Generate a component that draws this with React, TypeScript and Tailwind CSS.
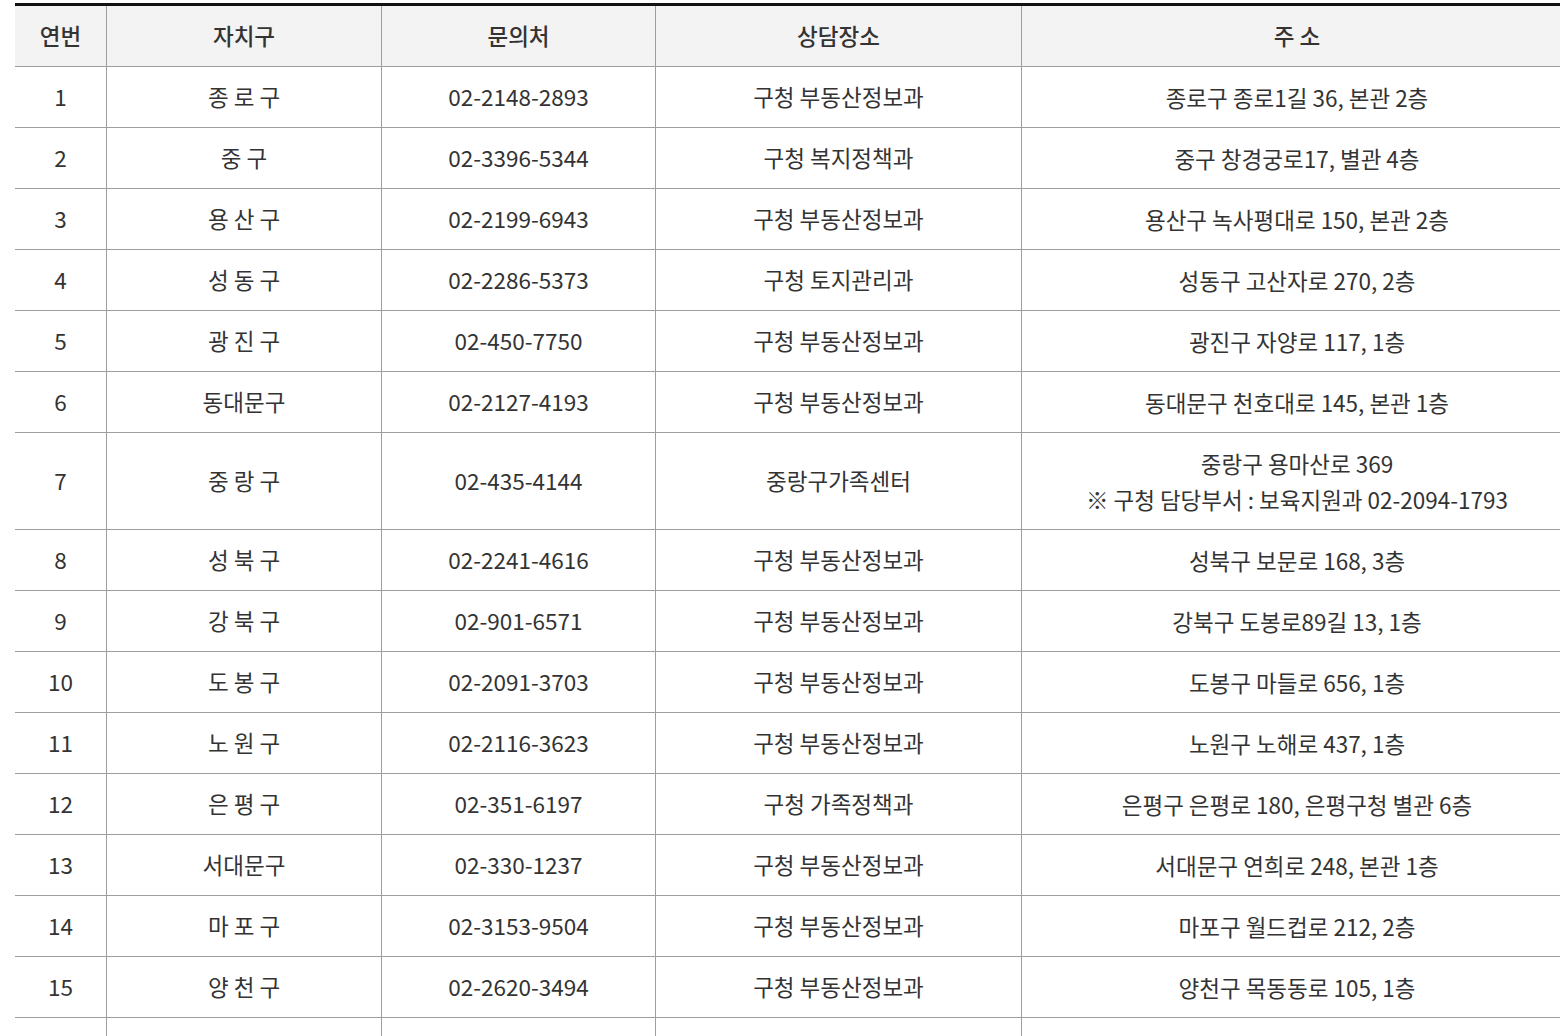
const rows = [
  { no: "1", gu: "종 로 구", tel: "02-2148-2893", place: "구청 부동산정보과", addr: ["종로구 종로1길 36, 본관 2층"] },
  { no: "2", gu: "중 구", tel: "02-3396-5344", place: "구청 복지정책과", addr: ["중구 창경궁로17, 별관 4층"] },
  { no: "3", gu: "용 산 구", tel: "02-2199-6943", place: "구청 부동산정보과", addr: ["용산구 녹사평대로 150, 본관 2층"] },
  { no: "4", gu: "성 동 구", tel: "02-2286-5373", place: "구청 토지관리과", addr: ["성동구 고산자로 270, 2층"] },
  { no: "5", gu: "광 진 구", tel: "02-450-7750", place: "구청 부동산정보과", addr: ["광진구 자양로 117, 1층"] },
  { no: "6", gu: "동대문구", tel: "02-2127-4193", place: "구청 부동산정보과", addr: ["동대문구 천호대로 145, 본관 1층"] },
  { no: "7", gu: "중 랑 구", tel: "02-435-4144", place: "중랑구가족센터", addr: ["중랑구 용마산로 369", "※ 구청 담당부서 : 보육지원과 02-2094-1793"] },
  { no: "8", gu: "성 북 구", tel: "02-2241-4616", place: "구청 부동산정보과", addr: ["성북구 보문로 168, 3층"] },
  { no: "9", gu: "강 북 구", tel: "02-901-6571", place: "구청 부동산정보과", addr: ["강북구 도봉로89길 13, 1층"] },
  { no: "10", gu: "도 봉 구", tel: "02-2091-3703", place: "구청 부동산정보과", addr: ["도봉구 마들로 656, 1층"] },
  { no: "11", gu: "노 원 구", tel: "02-2116-3623", place: "구청 부동산정보과", addr: ["노원구 노해로 437, 1층"] },
  { no: "12", gu: "은 평 구", tel: "02-351-6197", place: "구청 가족정책과", addr: ["은평구 은평로 180, 은평구청 별관 6층"] },
  { no: "13", gu: "서대문구", tel: "02-330-1237", place: "구청 부동산정보과", addr: ["서대문구 연희로 248, 본관 1층"] },
  { no: "14", gu: "마 포 구", tel: "02-3153-9504", place: "구청 부동산정보과", addr: ["마포구 월드컵로 212, 2층"] },
  { no: "15", gu: "양 천 구", tel: "02-2620-3494", place: "구청 부동산정보과", addr: ["양천구 목동동로 105, 1층"] },
];

const cols = "grid grid-cols-[91px_275px_274px_366px_1fr]";

function Cell({ children, first, tall }: { children?: React.ReactNode; first?: boolean; tall?: boolean }) {
  return (
    <div className={`flex flex-col items-center justify-center text-center ${tall ? "h-[96px]" : "h-[60px]"} ${first ? "" : "border-l border-[#9e9e9e]"}`}>
      {children}
    </div>
  );
}

export default function App() {
  return (
    <div className="w-[1560px] h-[1036px] overflow-hidden bg-white pt-[3px] pl-[15px] text-[#333] text-[22.5px] font-['Noto_Sans_CJK_KR','Noto_Sans',sans-serif]">
      {/* table runs past the right edge of the window */}
      <div className="w-[1557px] border-t-[3px] border-[#111]">
        <div className={`${cols} bg-[#f3f3f3] border-b border-[#9e9e9e] font-medium`}>
          {["연번", "자치구", "문의처", "상담장소", "주 소"].map((h, i) => (
            <Cell key={h} first={i === 0}>{h}</Cell>
          ))}
        </div>

        {rows.map(r => {
          const tall = r.addr.length > 1;
          return (
            <div key={r.no} className={`${cols} border-b border-[#9e9e9e]`}>
              <Cell first tall={tall}>{r.no}</Cell>
              <Cell tall={tall}>{r.gu}</Cell>
              <Cell tall={tall}>{r.tel}</Cell>
              <Cell tall={tall}>{r.place}</Cell>
              <Cell tall={tall}>
                {r.addr.map(a => (
                  <p key={a} className="leading-[36px]">{a}</p>
                ))}
              </Cell>
            </div>
          );
        })}

        {/* next row, cut off by the window */}
        <div className={cols}>
          <Cell first />
          <Cell />
          <Cell />
          <Cell />
          <Cell />
        </div>
      </div>
    </div>
  );
}
